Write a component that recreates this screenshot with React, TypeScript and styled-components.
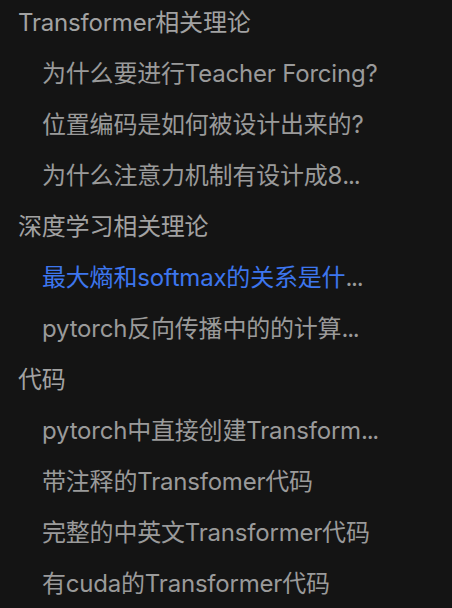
import React from "react";
import styled, { createGlobalStyle } from "styled-components";

const GlobalStyle = createGlobalStyle`
  html, body {
    margin: 0;
    padding: 0;
    background: #141414;
  }
  body {
    font-family: Inter, "Noto Sans CJK SC", "Noto Sans", sans-serif;
    -webkit-font-smoothing: antialiased;
  }
`;

const Outline = styled.nav`
  width: 400px;
  height: 608px;
  overflow: hidden;
  margin-top: -3px;
  display: flex;
  flex-direction: column;
`;

const Row = styled.div<{ $level: number }>`
  height: 51px;
  line-height: 51px;
  padding-left: ${(p) => (p.$level === 0 ? 18 : 42)}px;
  font-size: 24px;
  letter-spacing: -0.2px;
  color: ${(p) => (p.$level === 0 ? "#a2a2a2" : "#9a9a9a")};
  white-space: nowrap;
  cursor: pointer;
`;

const ActiveLabel = styled.span`
  color: #3d76ee;
`;

const Ellipsis = styled.span`
  letter-spacing: -1.2px;
  color: #9a9a9a;
`;

type Item = { label: string; clipped?: boolean };
type Section = { title: string; items: Item[] };

// labels as they show in the narrow outline panel
const outline: Section[] = [
  {
    title: "Transformer相关理论",
    items: [
      { label: "为什么要进行Teacher Forcing?" },
      { label: "位置编码是如何被设计出来的?" },
      { label: "为什么注意力机制有设计成8", clipped: true },
    ],
  },
  {
    title: "深度学习相关理论",
    items: [
      { label: "最大熵和softmax的关系是什", clipped: true },
      { label: "pytorch反向传播中的的计算", clipped: true },
    ],
  },
  {
    title: "代码",
    items: [
      { label: "pytorch中直接创建Transform", clipped: true },
      { label: "带注释的Transfomer代码" },
      { label: "完整的中英文Transformer代码" },
      { label: "有cuda的Transformer代码" },
    ],
  },
];

const active = "最大熵和softmax的关系是什";

export default function App() {
  return (
    <>
      <GlobalStyle />
      <Outline>
        {outline.map((section) => (
          <React.Fragment key={section.title}>
            <Row $level={0}>{section.title}</Row>
            {section.items.map((item) => (
              <Row $level={1} key={item.label}>
                {item.label === active ? (
                  <ActiveLabel>{item.label}</ActiveLabel>
                ) : (
                  item.label
                )}
                {item.clipped && <Ellipsis>...</Ellipsis>}
              </Row>
            ))}
          </React.Fragment>
        ))}
      </Outline>
    </>
  );
}
